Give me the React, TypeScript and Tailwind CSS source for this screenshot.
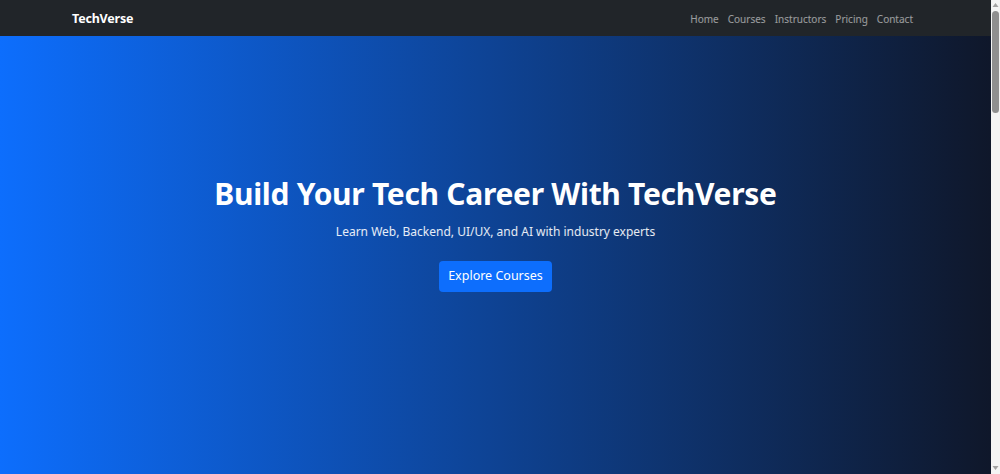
import React from "react";

const links = ["Home", "Courses", "Instructors", "Pricing", "Contact"];

function ScrollBar() {
  return (
    <div className="flex w-[9px] shrink-0 flex-col items-center bg-[#f4f4f4]">
      <svg width="7" height="9" viewBox="0 0 7 9" className="mt-[1px]">
        <path d="M3.5 2 L6.5 6 L0.5 6 Z" fill="#a3a3a3" />
      </svg>
      <div className="mt-[1px] h-[102px] w-[7px] rounded-[4px] bg-[#8f8f8f]" />
      <div className="flex-1" />
      <svg width="7" height="9" viewBox="0 0 7 9" className="mb-[2px]">
        <path d="M0.5 3 L6.5 3 L3.5 7 Z" fill="#a3a3a3" />
      </svg>
    </div>
  );
}

export default function App() {
  return (
    <div className="flex h-screen overflow-hidden font-['Noto_Sans','Open_Sans',sans-serif]">
      <div className="flex min-w-0 flex-1 flex-col">
        {/* Navbar */}
        <nav className="flex h-[36px] shrink-0 items-center justify-between bg-[#212529] pl-[72px] pr-[78px]">
          <a href="#" className="mt-[2px] text-[12.5px] font-bold leading-none tracking-[-0.2px] text-white">
            TechVerse
          </a>
          <ul className="-mt-[3px] flex items-center gap-[9px]">
            {links.map((l) => (
              <li key={l} className="leading-none">
                <a href="#" className="text-[10px] leading-none text-white/55">
                  {l}
                </a>
              </li>
            ))}
          </ul>
        </nav>

        {/* Hero */}
        <section className="flex flex-1 flex-col items-center bg-[linear-gradient(to_right,#0d6efd,#0f172a)] pt-[138px] text-center text-white">
          <h1 className="text-[30px] font-bold leading-[40px] tracking-[-0.3px]">
            Build Your Tech Career With TechVerse
          </h1>
          <p className="mt-[9px] text-[12px] leading-[18px] text-white/90">
            Learn Web, Backend, UI/UX, and AI with industry experts
          </p>
          <a
            href="#"
            className="mt-[20px] flex h-[31px] w-[113px] items-center justify-center rounded-[4px] bg-[#0d6efd] text-[12.5px] text-white"
          >
            Explore Courses
          </a>
        </section>
      </div>
      <ScrollBar />
    </div>
  );
}
